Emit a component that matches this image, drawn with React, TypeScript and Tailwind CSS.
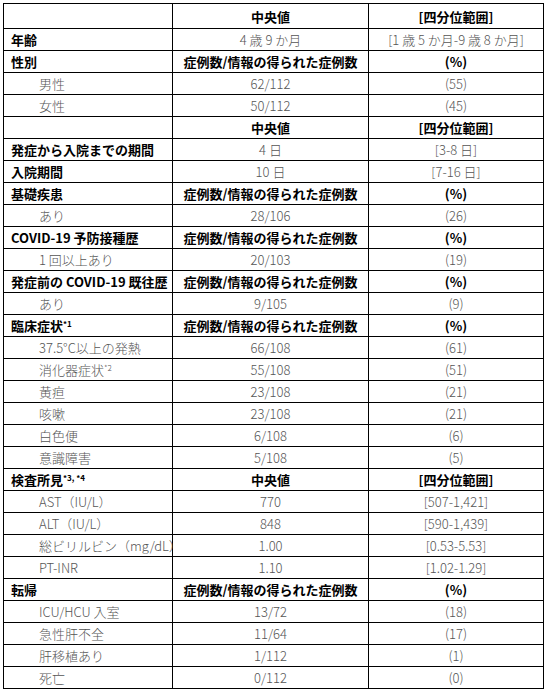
import React from "react";

type Row = {
  label: React.ReactNode;
  mid: string;
  right: string;
  head?: boolean; // whole row bold
  sub?: boolean; // indented sub item
};

const rows: Row[] = [
  { label: "", mid: "中央値", right: "[四分位範囲]", head: true },
  { label: "年齢", mid: "4 歳 9 か月", right: "[1 歳 5 か月-9 歳 8 か月]" },
  { label: "性別", mid: "症例数/情報の得られた症例数", right: "(%)", head: true },
  { label: "男性", mid: "62/112", right: "(55)", sub: true },
  { label: "女性", mid: "50/112", right: "(45)", sub: true },
  { label: "", mid: "中央値", right: "[四分位範囲]", head: true },
  { label: "発症から入院までの期間", mid: "4 日", right: "[3-8 日]" },
  { label: "入院期間", mid: "10 日", right: "[7-16 日]" },
  { label: "基礎疾患", mid: "症例数/情報の得られた症例数", right: "(%)", head: true },
  { label: "あり", mid: "28/106", right: "(26)", sub: true },
  { label: "COVID-19 予防接種歴", mid: "症例数/情報の得られた症例数", right: "(%)", head: true },
  { label: "1 回以上あり", mid: "20/103", right: "(19)", sub: true },
  { label: "発症前の COVID-19 既往歴", mid: "症例数/情報の得られた症例数", right: "(%)", head: true },
  { label: "あり", mid: "9/105", right: "(9)", sub: true },
  {
    label: (
      <>
        臨床症状<sup className="text-[8px]">*1</sup>
      </>
    ),
    mid: "症例数/情報の得られた症例数",
    right: "(%)",
    head: true,
  },
  { label: "37.5°C以上の発熱", mid: "66/108", right: "(61)", sub: true },
  {
    label: (
      <>
        消化器症状<sup className="text-[8px]">*2</sup>
      </>
    ),
    mid: "55/108",
    right: "(51)",
    sub: true,
  },
  { label: "黄疸", mid: "23/108", right: "(21)", sub: true },
  { label: "咳嗽", mid: "23/108", right: "(21)", sub: true },
  { label: "白色便", mid: "6/108", right: "(6)", sub: true },
  { label: "意識障害", mid: "5/108", right: "(5)", sub: true },
  {
    label: (
      <>
        検査所見<sup className="text-[8px]">*3, *4</sup>
      </>
    ),
    mid: "中央値",
    right: "[四分位範囲]",
    head: true,
  },
  { label: "AST（IU/L）", mid: "770", right: "[507-1,421]", sub: true },
  { label: "ALT（IU/L）", mid: "848", right: "[590-1,439]", sub: true },
  { label: "総ビリルビン（mg/dL）", mid: "1.00", right: "[0.53-5.53]", sub: true },
  { label: "PT-INR", mid: "1.10", right: "[1.02-1.29]", sub: true },
  { label: "転帰", mid: "症例数/情報の得られた症例数", right: "(%)", head: true },
  { label: "ICU/HCU 入室", mid: "13/72", right: "(18)", sub: true },
  { label: "急性肝不全", mid: "11/64", right: "(17)", sub: true },
  { label: "肝移植あり", mid: "1/112", right: "(1)", sub: true },
  { label: "死亡", mid: "0/112", right: "(0)", sub: true },
];

export default function App() {
  return (
    <div className="min-h-[695px] w-[546px] bg-white pl-[3px] pt-[3px] font-['Noto_Sans_CJK_JP','Liberation_Sans',sans-serif] text-[13px] leading-none">
      <table className="w-[540px] table-fixed border-collapse border border-black">
        <colgroup>
          <col className="w-[169px]" />
          <col className="w-[196px]" />
          <col className="w-[175px]" />
        </colgroup>
        <tbody>
          {rows.map((r, i) => {
            const valueCls = r.head ? "font-bold text-black" : "font-light text-[#555]";
            return (
              <tr key={i} className={i === 0 ? "h-[25px]" : "h-[22px]"}>
                <td
                  className={
                    "border border-black p-0 whitespace-nowrap " +
                    (r.sub ? "pl-[35px] font-light text-[#555]" : "pl-[7px] font-bold text-black")
                  }
                >
                  {r.label}
                </td>
                <td className={"border border-black p-0 text-center whitespace-nowrap " + valueCls}>
                  {r.mid}
                </td>
                <td className={"border border-black p-0 text-center whitespace-nowrap " + valueCls}>
                  {r.right}
                </td>
              </tr>
            );
          })}
        </tbody>
      </table>
    </div>
  );
}
